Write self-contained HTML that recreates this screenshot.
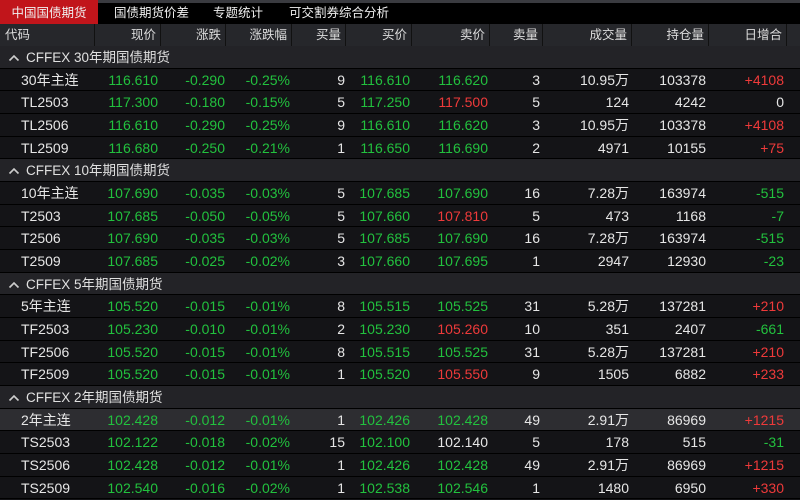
<!DOCTYPE html><html><head><meta charset="utf-8"><style>
body{margin:0;width:800px;height:495px;overflow:hidden;background:#131316;font-family:"Liberation Sans","Noto Sans CJK SC",sans-serif;color:#e6e6e6}
.top{position:absolute;top:0;left:0;width:800px;height:24px;background:#000}
.top .bar{position:absolute;top:0;left:98px;width:702px;height:3px;background:#3a3b40}
.tab{position:absolute;top:0;height:24px;line-height:26px;font-size:12.5px;color:#f0f0f0}
.hdr{position:absolute;top:24px;left:0;width:800px;height:22px;background:#26272b;border-bottom:1px solid #000;font-size:12.5px;color:#ddd}
.hc{position:absolute;top:0;height:22px;line-height:22px;text-align:right;border-right:1px solid #111}
.rows{position:absolute;top:46px;left:0;width:800px}
.r{position:absolute;left:0;width:800px;height:21.7px;border-bottom:1px solid #000;background:#141417;font-size:14px}
.g{background:#232327;font-size:13.5px;color:#e0e0e0}
.hl{background:#2d2d31}
.c{position:absolute;top:0;line-height:23px;text-align:right;white-space:nowrap}
.gr{color:#22c13e}.rd{color:#ee3a3a}
</style></head><body>
<div class="top"><div class="bar"></div>
<div class="tab" style="left:0;width:98px;background:#c1151b;text-align:center">中国国债期货</div>
<div class="tab" style="left:114px">国债期货价差</div>
<div class="tab" style="left:213px">专题统计</div>
<div class="tab" style="left:289px">可交割券综合分析</div></div>
<div class="hdr">
<div class="hc" style="left:0;width:95px;text-align:left;padding-left:5px;box-sizing:border-box">代码</div>
<div class="hc" style="left:96px;width:60px;padding-right:4px">现价</div>
<div class="hc" style="left:161px;width:60px;padding-right:4px">涨跌</div>
<div class="hc" style="left:227px;width:60px;padding-right:4px">涨跌幅</div>
<div class="hc" style="left:293px;width:48px;padding-right:4px">买量</div>
<div class="hc" style="left:346px;width:61px;padding-right:4px">买价</div>
<div class="hc" style="left:412px;width:73px;padding-right:4px">卖价</div>
<div class="hc" style="left:490px;width:48px;padding-right:4px">卖量</div>
<div class="hc" style="left:543px;width:84px;padding-right:4px">成交量</div>
<div class="hc" style="left:632px;width:72px;padding-right:4px">持仓量</div>
<div class="hc" style="left:709px;width:73px;padding-right:4px">日增合</div>
</div>
<div class="rows" id="rows"></div>
<script>
var D=[
["G","CFFEX 30年期国债期货"],
["30年主连","116.610","-0.290","-0.25%","9","116.610","116.620g","3","10.95万","103378","+4108r"],
["TL2503","117.300","-0.180","-0.15%","5","117.250","117.500r","5","124","4242","0w"],
["TL2506","116.610","-0.290","-0.25%","9","116.610","116.620g","3","10.95万","103378","+4108r"],
["TL2509","116.680","-0.250","-0.21%","1","116.650","116.690g","2","4971","10155","+75r"],
["G","CFFEX 10年期国债期货"],
["10年主连","107.690","-0.035","-0.03%","5","107.685","107.690g","16","7.28万","163974","-515g"],
["T2503","107.685","-0.050","-0.05%","5","107.660","107.810r","5","473","1168","-7g"],
["T2506","107.690","-0.035","-0.03%","5","107.685","107.690g","16","7.28万","163974","-515g"],
["T2509","107.685","-0.025","-0.02%","3","107.660","107.695g","1","2947","12930","-23g"],
["G","CFFEX 5年期国债期货"],
["5年主连","105.520","-0.015","-0.01%","8","105.515","105.525g","31","5.28万","137281","+210r"],
["TF2503","105.230","-0.010","-0.01%","2","105.230","105.260r","10","351","2407","-661g"],
["TF2506","105.520","-0.015","-0.01%","8","105.515","105.525g","31","5.28万","137281","+210r"],
["TF2509","105.520","-0.015","-0.01%","1","105.520","105.550r","9","1505","6882","+233r"],
["G","CFFEX 2年期国债期货"],
["2年主连","102.428","-0.012","-0.01%","1","102.426","102.428g","49","2.91万","86969","+1215r","H"],
["TS2503","102.122","-0.018","-0.02%","15","102.100","102.140w","5","178","515","-31g"],
["TS2506","102.428","-0.012","-0.01%","1","102.426","102.428g","49","2.91万","86969","+1215r"],
["TS2509","102.540","-0.016","-0.02%","1","102.538","102.546g","1","1480","6950","+330r"]];
var R=[158,225,290,345,410,488,540,629,706,784];
var h="";
D.forEach(function(d,k){
var top='style="top:'+(k*22.67).toFixed(2)+'px"';
if(d[0]=="G"){h+='<div class="r g" '+top+'><span class="c" style="left:8px;text-align:left"><svg width="12" height="8" style="margin-right:6px"><path d="M1.5 6.5L6 2L10.5 6.5" stroke="#ccc" stroke-width="1.6" fill="none"/></svg>'+d[1]+'</span></div>';return;}
h+='<div class="r'+(d[11]?' hl':'')+'" '+top+'><span class="c" style="left:21px;text-align:left">'+d[0]+'</span>';
for(var i=1;i<=10;i++){var v=d[i],cl="";
if(i<=3||i==5)cl="gr";else if(i==6||i==10){var s=v.slice(-1);v=v.slice(0,-1);cl=s=="g"?"gr":s=="r"?"rd":"";}
h+='<span class="c '+cl+'" style="right:'+(800-R[i-1])+'px">'+v+'</span>';}
h+='</div>';});
document.getElementById("rows").innerHTML=h;
</script>
</body></html>
